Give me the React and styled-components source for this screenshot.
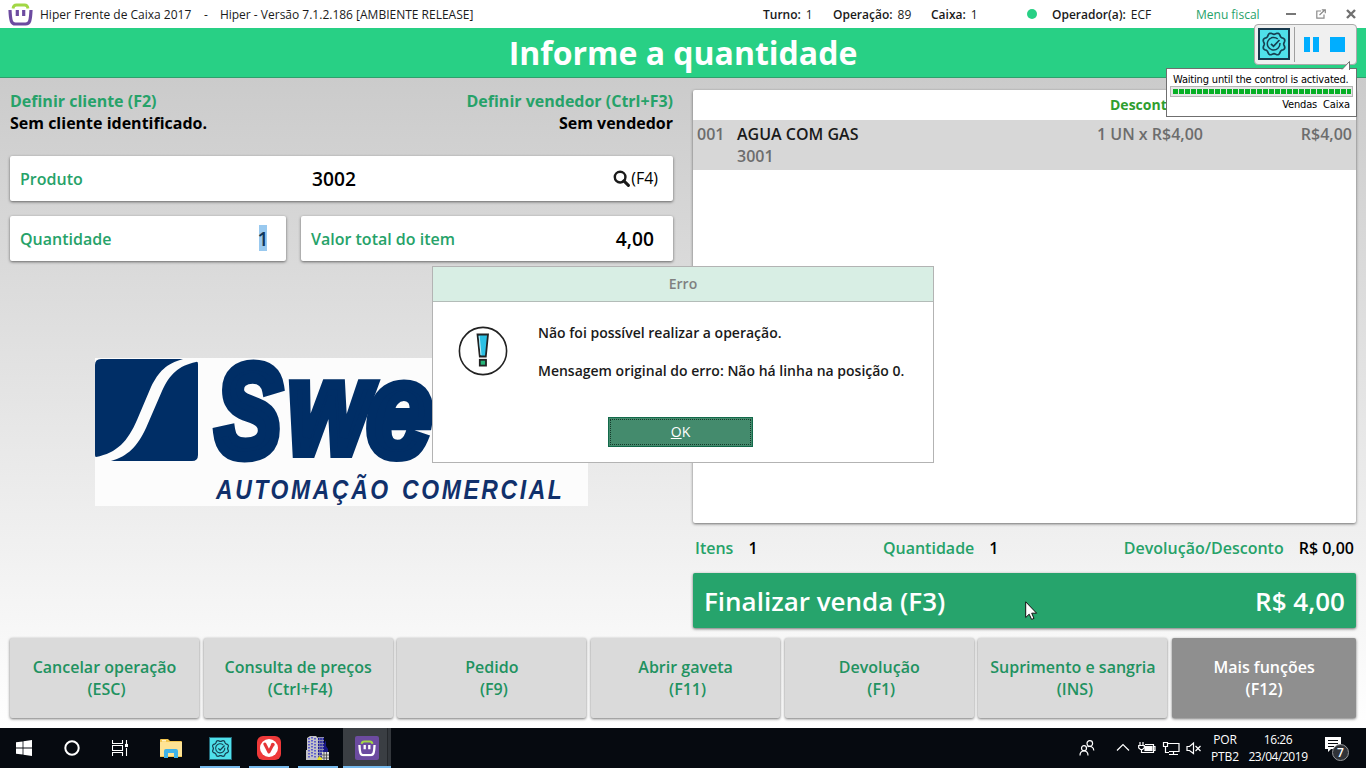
import React from "react";
import styled, { createGlobalStyle } from "styled-components";

const GlobalStyle = createGlobalStyle`
  * { box-sizing: border-box; }
  body { margin: 0; overflow: hidden; }
`;

const Screen = styled.div`
  position: relative;
  width: 1366px;
  height: 768px;
  display: flex;
  flex-direction: column;
  overflow: hidden;
  background: #fff;
  color: #000;
  font-family: "Open Sans", "Noto Sans", sans-serif;
  white-space: nowrap;
`;

const TitleBar = styled.header`
  height: 28px;
  flex: none;
  display: flex;
  align-items: center;
  padding: 0 10px 0 8px;
  font-size: 12px;
  line-height: 28px;
  color: #1a1a1a;
  > span, > a { padding-top: 2px; }
`;

const AppName = styled.span`
  width: 164px;
  margin-left: 7px;
`;

const Version = styled.span`
  margin-left: 12px;
  flex: 1;
`;

const Status = styled.span`
  width: ${(p) => p.$width}px;
  b { font-weight: 600; margin-right: 5px; }
`;

const OnlineDot = styled.i`
  width: 10px;
  height: 10px;
  margin-right: 15px;
  border-radius: 50%;
  background: #28d085;
`;

const MenuLink = styled.a`
  width: 90px;
  color: #26a269;
`;

const WindowControls = styled.div`
  display: flex;
  align-items: center;
  justify-content: space-between;
  width: 70px;
`;

const Banner = styled.h1`
  height: 50px;
  flex: none;
  margin: 0;
  border-bottom: 1px solid #2f9f6c;
  background: #28d085;
  color: #fff;
  text-align: center;
  font-size: 32px;
  font-weight: 700;
  line-height: 50px;
`;

const Workspace = styled.main`
  height: 650px;
  flex: none;
  display: flex;
  flex-direction: column;
  justify-content: space-between;
  padding: 12px 10px 10px;
  background: linear-gradient(#cbcbcb, #ffffff);
`;

const Columns = styled.div`
  display: grid;
  grid-template-columns: 663px 663px;
  column-gap: 20px;
`;

const Column = styled.section`
  display: flex;
  flex-direction: column;
`;

const People = styled.div`
  display: flex;
  justify-content: space-between;
  height: 66px;
  font-size: 16px;
  font-weight: 700;
  line-height: 22px;
`;

const Person = styled.div`
  text-align: ${(p) => p.$align || "left"};
  em { display: block; font-style: normal; color: #26a269; }
`;

const FieldRow = styled.div`
  display: flex;
  gap: 15px;
  margin-bottom: 15px;
`;

const Field = styled.div`
  flex: ${(p) => (p.$width ? `0 0 ${p.$width}px` : 1)};
  display: flex;
  align-items: center;
  height: 45px;
  padding: 0 ${(p) => p.$right}px 0 10px;
  border-radius: 2px;
  background: #fff;
  box-shadow: 0 1px 3px rgba(0, 0, 0, 0.55);
`;

const FieldLabel = styled.label`
  width: ${(p) => (p.$width ? `${p.$width}px` : "auto")};
  font-size: 16px;
  font-weight: 600;
  color: #26a269;
`;

const FieldValue = styled.output`
  flex: 1;
  text-align: ${(p) => p.$align || "right"};
  font-size: 19.2px;
  font-weight: 600;
  line-height: 26px;
`;

const Selected = styled.mark`
  display: inline-flex;
  justify-content: center;
  width: 8px;
  height: 26px;
  margin-top: -4px;
  padding-top: 1px;
  vertical-align: middle;
  background: #99c9ef;
  color: #10375c;
`;

const SearchHint = styled.span`
  display: flex;
  align-items: center;
  gap: 1px;
  padding-bottom: 1px;
  font-size: 16px;
`;

const Brand = styled.div`
  width: 493px;
  height: 148px;
  margin: 82px 0 0 85px;
`;

const Receipt = styled.div`
  height: 433px;
  border-radius: 2px;
  background: #fff;
  box-shadow: 0 1px 3px rgba(0, 0, 0, 0.55);
`;

const ReceiptHead = styled.div`
  height: 30px;
  padding-left: 417px;
  font-size: 14px;
  font-weight: 700;
  line-height: 30px;
  color: #2f9e2f;
`;

const ReceiptItem = styled.div`
  display: grid;
  grid-template-columns: 40px 1fr auto 149px;
  height: 50px;
  padding: 3px 4px;
  background: #d7d7d7;
  color: #6d6d6d;
  font-size: 16px;
  font-weight: 600;
  line-height: 22px;
`;

const ItemName = styled.div`
  strong { display: block; font-weight: 600; color: #1a1a1a; }
`;

const Price = styled.div`
  text-align: right;
`;

const Totals = styled.div`
  display: flex;
  justify-content: space-between;
  height: 50px;
  padding: 0 2px;
  font-size: 16px;
  font-weight: 600;
  line-height: 50px;
`;

const Total = styled.div`
  display: flex;
  gap: 15px;
  span { color: #26a269; }
`;

const Checkout = styled.button`
  display: flex;
  align-items: center;
  justify-content: space-between;
  height: 55px;
  padding: 0 11px;
  border: 0;
  border-radius: 2px;
  background: #26a46c;
  box-shadow: 0 1px 3px rgba(0, 0, 0, 0.55);
  color: #fff;
  font: 600 26px "Open Sans", "Noto Sans", sans-serif;
`;

const Actions = styled.nav`
  display: grid;
  grid-template-columns: repeat(6, 189px) 1fr;
  column-gap: 4.7px;
`;

const Action = styled.button`
  height: 80px;
  padding: 0 0 1px;
  border: 0;
  border-radius: 2px;
  background: ${(p) => (p.$dark ? "#8f8f8f" : "#dadada")};
  box-shadow: 0 1px 3px rgba(0, 0, 0, 0.55);
  color: ${(p) => (p.$dark ? "#fff" : "#219260")};
  font: 600 16px/22px "Open Sans", "Noto Sans", sans-serif;
  span { display: block; padding-left: ${(p) => (p.$dark ? 0 : 4)}px; }
`;

const Taskbar = styled.footer`
  height: 40px;
  flex: none;
  display: flex;
  background: #060a10;
  color: #fff;
`;

const Task = styled.div`
  width: ${(p) => p.$width || 49}px;
  display: flex;
  align-items: center;
  justify-content: center;
  padding-left: ${(p) => p.$indent || 0}px;
  background: ${(p) => (p.$active ? "#3a3e43" : "transparent")};
  box-shadow: ${(p) => (p.$active ? "inset -3px 0 #33373c, inset -4px 0 #24272b" : "none")};
`;

const OpenTask = styled(Task)`
  position: relative;
  padding-right: ${(p) => (p.$active ? 0 : 1)}px;
  &::after {
    content: "";
    position: absolute;
    left: ${(p) => (p.$active ? 0 : 4)}px;
    right: ${(p) => (p.$active ? 0 : 5)}px;
    bottom: 0;
    height: 2px;
    background: #76b9ed;
  }
`;

const Spacer = styled.div`
  flex: 1;
`;

const Tray = styled.div`
  display: flex;
  align-items: center;
  width: 287px;
  svg { flex: none; }
`;

const TrayGap = styled.i`
  width: ${(p) => p.$width}px;
`;

const TrayText = styled.div`
  width: ${(p) => p.$width}px;
  margin-left: ${(p) => p.$left || 0}px;
  text-align: center;
  font-size: 12px;
  line-height: 17px;
  letter-spacing: ${(p) => p.$spacing || 0}px;
`;

const Dialog = styled.div`
  position: absolute;
  left: 432px;
  top: 266px;
  width: 502px;
  height: 197px;
  border: 1px solid #b3b3b3;
  background: #fff;
`;

const DialogTitle = styled.div`
  height: 35px;
  border-bottom: 1px solid #b3bcb8;
  background: #d8eee4;
  color: #808080;
  text-align: center;
  font-size: 14px;
  font-weight: 600;
  line-height: 34px;
`;

const DialogBody = styled.div`
  display: flex;
  height: 115px;
  padding: 24px 0 0 25px;
`;

const DialogText = styled.div`
  margin: -3px 0 0 30px;
  font-size: 14px;
  font-weight: 600;
  line-height: 19px;
  color: #1a1a1a;
  p { margin: 0 0 19px; }
`;

const OkButton = styled.button`
  display: block;
  width: 145px;
  height: 30px;
  margin-left: 175px;
  padding: 0;
  border: 1px solid #12694a;
  outline: 1px dotted #163b2c;
  outline-offset: -3px;
  background: #448b6d;
  color: #fff;
  font: 14px/26px "Open Sans", "Noto Sans", sans-serif;
`;

const Recorder = styled.div`
  position: absolute;
  left: 1254px;
  top: 24px;
  width: 103px;
  height: 41px;
  display: flex;
  align-items: center;
  padding: 0 0 1px 3px;
  border: 1px solid #a9a9a9;
  border-radius: 4px;
  background: #f0f0f0;
`;

const Divider = styled.i`
  width: 1px;
  height: 35px;
  margin: 0 9px 0 4px;
  background: #a0a0a0;
`;

const Block = styled.i`
  width: ${(p) => p.$width}px;
  height: 15px;
  margin-right: ${(p) => p.$gap || 0}px;
  background: #00aeff;
`;

const Balloon = styled.div`
  position: absolute;
  left: 1166px;
  top: 68px;
  width: 191px;
  height: 49px;
  padding: 4px 3px 0;
  border: 1px solid #6f6f6f;
  background: #fff;
  font: 11px/13px "DejaVu Sans Condensed", "DejaVu Sans", sans-serif;
  font-stretch: condensed;
`;

const BalloonTail = styled.svg`
  position: absolute;
  right: 2px;
  top: -8px;
`;

const BalloonText = styled.div`
  padding: 0 3px;
  letter-spacing: -0.18px;
`;

const Progress = styled.div`
  height: 11px;
  margin: 0 0 2px;
  padding: 2px 1px 2px 2px;
  border: 1px solid #b5b5b5;
  background: #e6e6e6;
  span {
    display: block;
    height: 5px;
    background: repeating-linear-gradient(90deg, #06b025 0 5px, #e6e6e6 5px 6px);
  }
`;

const BalloonFoot = styled.div`
  display: flex;
  justify-content: flex-end;
  gap: 6px;
  padding-right: 3px;
  margin-top: -1px;
  letter-spacing: -0.15px;
`;

const Pointer = styled.svg`
  position: absolute;
  left: 1025px;
  top: 601px;
`;

const Basket = ({ handle = "#a2d745", body = "#6c4ba0", size = 25 }) => (
  <svg width={size} height={size * 0.92} viewBox="0 0 25 23" fill="none">
    <path d="M5 5.5C5.3 2.8 6.4 2 8.5 2H16.5C18.6 2 19.7 2.8 20 5.5" stroke={handle} strokeWidth="2.8" />
    <path d="M2 7C2.2 12 2.4 15 3.3 18C4 20.3 5.3 21 7.5 21H17.5C19.7 21 21 20.3 21.7 18C22.6 15 22.8 12 23 7" stroke={body} strokeWidth="3.2" />
    <path d="M9.3 7V13M15.7 7V13" stroke={body} strokeWidth="3.2" />
  </svg>
);

const gearPoints = Array.from({ length: 80 }, (_, i) => {
  const a = (i / 80) * Math.PI * 2;
  const r = 10.6 + 0.9 * Math.cos(a * 8 + Math.PI);
  return `${(13 + r * Math.cos(a)).toFixed(2)},${(13 + r * Math.sin(a)).toFixed(2)}`;
}).join(" ");

const Seal = ({ size, box, border, bg }) => (
  <svg width={box} height={box} viewBox={`0 0 ${box} ${box}`}>
    <rect width={box} height={box} fill={border} />
    <rect x={box > 28 ? 2 : 1} y={box > 28 ? 2 : 1} width={box - (box > 28 ? 4 : 2)} height={box - (box > 28 ? 4 : 2)} fill={bg} />
    <g transform={`translate(${(box - size) / 2} ${(box - size) / 2}) scale(${size / 26})`} fill="none" stroke="#164052">
      <polygon points={gearPoints} strokeWidth="1.7" strokeLinejoin="round" />
      <path d="M18.9 12A6.3 6.3 0 1 1 16.8 8" strokeWidth="1.5" />
      <path d="M10 12.8L12.5 15.3L18.5 9" strokeWidth="1.8" />
    </g>
  </svg>
);

const BrandSvg = styled.svg`
  display: block;
  overflow: visible;
`;

const BrandLogo = () => (
  <BrandSvg width="493" height="148" viewBox="95 358 493 148">
    <rect x="95" y="358" width="493" height="148" fill="#fcfcfc" />
    <path d="M101 359H183C166 364 159 371 151 387L137 420C128 441 117 453 96 457Q95 457 95 455V365Q95 359 101 359Z" fill="#002e66" />
    <path d="M196 362Q198 361 198 364V455Q198 461 192 461H111C128 456 137 447 146 428L162 391C170 374 178 366 196 362Z" fill="#002e66" />
    <g fill="#002e66" stroke="#002e66" strokeLinejoin="miter" fontFamily="Liberation Sans, Arial, sans-serif" fontWeight="700" fontStyle="italic" fontSize="130">
      <text transform="translate(216 456) scale(0.75 1)" strokeWidth="11">S</text>
      <text transform="translate(288 453) scale(0.8 1)" strokeWidth="10">w</text>
      <text transform="translate(367 456) scale(0.9 1.02)" strokeWidth="10">e</text>
    </g>
    <g fill="#10306b" fontFamily="Liberation Sans, Arial, sans-serif" fontSize="28" fontWeight="700" fontStyle="italic">
      <text transform="translate(216 499) scale(0.82 1)" textLength="210" lengthAdjust="spacing">AUTOMAÇÃO</text>
      <text transform="translate(402 499) scale(0.82 1)" textLength="195" lengthAdjust="spacing">COMERCIAL</text>
    </g>
  </BrandSvg>
);

const WarningIcon = () => (
  <svg width="50" height="50" viewBox="0 0 50 50">
    <circle cx="25" cy="25" r="23.6" fill="#fff" stroke="#222" strokeWidth="1.6" />
    <path d="M19.5 8.5H30L27.8 30.5H21.8Z" fill="#2cc0e4" stroke="#222" strokeWidth="1.8" />
    <path d="M21.2 10L23 29" stroke="#b9ecf7" strokeWidth="1" />
    <rect x="21.8" y="33.8" width="6.2" height="5.8" fill="#25b478" stroke="#222" strokeWidth="1.8" />
  </svg>
);

const WindowsIcon = () => (
  <svg width="16" height="16" viewBox="0 0 16 16" fill="#fff">
    <path d="M0 2.3L6.6 1.4V7.6H0ZM7.4 1.3L16 0V7.6H7.4ZM0 8.4H6.6V14.6L0 13.7ZM7.4 8.4H16V16L7.4 14.7Z" />
  </svg>
);

const TaskViewIcon = () => (
  <svg width="16" height="16" viewBox="0 0 16 16" fill="none" stroke="#fff" strokeWidth="1.1">
    <path d="M.5 0V3.5H10.5V0M.5 16V12.5H10.5V16M.5 5.5H10.5V10.5H.5ZM14.5 0V4M14.5 8V16" />
    <rect x="13.5" y="4.5" width="2" height="2" fill="#fff" />
  </svg>
);

const FolderIcon = () => (
  <svg width="22" height="19" viewBox="0 0 22 19">
    <path d="M0 1Q0 0 1 0H8L10 2H21Q22 2 22 3V18H0Z" fill="#f3c64f" />
    <path d="M0 3H22V17H0Z" fill="#fee394" />
    <rect x="2" y="1" width="4" height="1.5" fill="#fff3c8" />
    <path d="M4 19V12Q4 10 6 10H16Q18 10 18 12V19H14V14H8V19Z" fill="#3eb2e8" />
  </svg>
);

const VivaldiIcon = () => (
  <svg width="24" height="24" viewBox="0 0 24 24">
    <rect width="24" height="24" rx="6" fill="#ee3939" />
    <circle cx="12" cy="12" r="9" fill="#fff" />
    <path d="M7.8 8L11.9 16L15.2 9.7" fill="none" stroke="#e53638" strokeWidth="3" strokeLinecap="round" strokeLinejoin="round" />
    <circle cx="15.8" cy="8.6" r="1.9" fill="#e53638" />
  </svg>
);

const CityIcon = () => (
  <svg width="24" height="24" viewBox="0 0 24 24">
    <path d="M1 2L4 0H10L12 2V24H0V14H1Z" fill="#c3c3c8" />
    <path d="M3 2V22M6 1V22M9 2V22" stroke="#2a2ad0" strokeWidth="1.3" strokeDasharray="1.5 1.5" />
    <path d="M12 1H18V24H12Z" fill="#8d8dac" />
    <path d="M12.7 2V22M15 2V22M17.3 2V22" stroke="#1515a0" strokeWidth="1.3" strokeDasharray="2 1" />
    <path d="M18 8L20 4V10L22 13V18H18Z" fill="#171783" />
    <path d="M16 16H23V24H16Z" fill="#dadada" />
    <path d="M18 16V24M20.5 16V24M16 19H23M16 22H23" stroke="#444" strokeWidth=".8" />
    <path d="M11 24L13 20L16 22V24Z" fill="#e8df20" />
  </svg>
);

const PeopleIcon = () => (
  <svg width="16" height="16" viewBox="0 0 16 16" fill="none" stroke="#fff" strokeWidth="1.2">
    <circle cx="10.8" cy="3.5" r="2.8" />
    <circle cx="5" cy="8.2" r="2.5" />
    <path d="M1 15.5C1 12.5 2.5 11 5 11C7.5 11 9 12.5 9 15.5M8.4 6.8C11 5.6 14.8 6.8 14.8 10.6" />
  </svg>
);

const TrayIcons = () => (
  <svg width="88" height="20" viewBox="0 0 88 20" fill="none" stroke="#fff" strokeWidth="1.2">
    <path d="M2 12.5L8 6.5L14 12.5" />
    <path d="M30 6.5H38.5V14.5H29M38.5 8.5H40V12.5H38.5" />
    <rect x="30" y="8.5" width="7" height="4" fill="#fff" />
    <path d="M25 4V7M28 4V7M23.7 7.5H29.3V10L27.5 11.5H25.5L23.7 10ZM26.5 12V14.5H29" />
    <path d="M53 5.5H64V13.5H54M58.5 13.5V16.5M54 16.5H63M48.5 4.5H52.5V8.5H48.5ZM50.5 8.5V14.5H54" />
    <path d="M72 8.5H74.5L78.5 5V15.5L74.5 12.5H72Z" />
    <path d="M80.5 8L85.5 13M85.5 8L80.5 13" />
  </svg>
);

const NotificationIcon = () => (
  <svg width="26" height="26" viewBox="0 0 26 26">
    <path d="M0 2H16V14H6L3 17V14H0Z" fill="#fff" />
    <path d="M3 5.5H13M3 8.5H13M3 11.5H9" stroke="#060a10" />
    <circle cx="15.5" cy="17.5" r="8" fill="#303338" stroke="#96989b" />
    <text x="15.5" y="21.7" textAnchor="middle" fill="#fff" fontFamily="Open Sans, sans-serif" fontSize="12" fontWeight="600">7</text>
  </svg>
);

const actions = [
  ["Cancelar operação", "(ESC)"],
  ["Consulta de preços", "(Ctrl+F4)"],
  ["Pedido", "(F9)"],
  ["Abrir gaveta", "(F11)"],
  ["Devolução", "(F1)"],
  ["Suprimento e sangria", "(INS)"],
  ["Mais funções", "(F12)"],
];

export default function App() {
  return (
    <Screen>
      <GlobalStyle />
      <TitleBar>
        <Basket />
        <AppName>Hiper Frente de Caixa 2017</AppName>
        <span>-</span>
        <Version>Hiper - Versão 7.1.2.186 [AMBIENTE RELEASE]</Version>
        <Status $width={70}><b>Turno:</b>1</Status>
        <Status $width={98}><b>Operação:</b>89</Status>
        <Status $width={96}><b>Caixa:</b>1</Status>
        <OnlineDot />
        <Status $width={144}><b>Operador(a):</b>ECF</Status>
        <MenuLink>Menu fiscal</MenuLink>
        <WindowControls>
          <svg width="10" height="10" viewBox="0 0 10 10"><path d="M0 5H10" stroke="#777" strokeWidth="2" /></svg>
          <svg width="10" height="10" viewBox="0 0 10 10" fill="none" stroke="#8a8a8a">
            <path d="M5 2H.8V9.2H8V5.5M3.5 6L9 .8M5.8 .8H9.3V4.2" strokeWidth="1.2" />
          </svg>
          <svg width="10" height="10" viewBox="0 0 10 10"><path d="M1 1L9 9M9 1L1 9" stroke="#707070" strokeWidth="2.4" /></svg>
        </WindowControls>
      </TitleBar>
      <Banner>Informe a quantidade</Banner>
      <Workspace>
        <Columns>
          <Column>
            <People>
              <Person><em>Definir cliente (F2)</em>Sem cliente identificado.</Person>
              <Person $align="right"><em>Definir vendedor (Ctrl+F3)</em>Sem vendedor</Person>
            </People>
            <FieldRow>
              <Field $right={15}>
                <FieldLabel $width={292}>Produto</FieldLabel>
                <FieldValue $align="left">3002</FieldValue>
                <SearchHint>
                  <svg width="17" height="17" viewBox="0 0 16 16" fill="none" stroke="#1a1a1a">
                    <circle cx="6.7" cy="6.7" r="5" strokeWidth="2.3" />
                    <path d="M10.2 10.2L14.5 14.5" strokeWidth="2.8" strokeLinecap="round" />
                  </svg>
                  (F4)
                </SearchHint>
              </Field>
            </FieldRow>
            <FieldRow>
              <Field $width={276} $right={19}>
                <FieldLabel>Quantidade</FieldLabel>
                <FieldValue><Selected>1</Selected></FieldValue>
              </Field>
              <Field $right={19}>
                <FieldLabel>Valor total do item</FieldLabel>
                <FieldValue>4,00</FieldValue>
              </Field>
            </FieldRow>
            <Brand><BrandLogo /></Brand>
          </Column>
          <Column>
            <Receipt>
              <ReceiptHead>Desconto</ReceiptHead>
              <ReceiptItem>
                <span>001</span>
                <ItemName><strong>AGUA COM GAS</strong>3001</ItemName>
                <Price>1 UN x R$4,00</Price>
                <Price>R$4,00</Price>
              </ReceiptItem>
            </Receipt>
            <Totals>
              <Total><span>Itens</span>1</Total>
              <Total><span>Quantidade</span>1</Total>
              <Total><span>Devolução/Desconto</span>R$ 0,00</Total>
            </Totals>
            <Checkout><span>Finalizar venda (F3)</span><span>R$ 4,00</span></Checkout>
          </Column>
        </Columns>
        <Actions>
          {actions.map(([name, key], i) => (
            <Action key={key} $dark={i === 6}>{name}<span>{key}</span></Action>
          ))}
        </Actions>
      </Workspace>
      <Taskbar>
        <Task $width={48}><WindowsIcon /></Task>
        <Task $width={48}>
          <svg width="16" height="16" viewBox="0 0 16 16"><circle cx="8" cy="8" r="6.7" fill="none" stroke="#fff" strokeWidth="2" /></svg>
        </Task>
        <Task $width={48}><TaskViewIcon /></Task>
        <Task $width={52} $indent={2}><FolderIcon /></Task>
        <OpenTask><Seal size={19} box={23} border="#236a7a" bg="#4fe0ea" /></OpenTask>
        <OpenTask><VivaldiIcon /></OpenTask>
        <OpenTask><CityIcon /></OpenTask>
        <OpenTask $active $width={48}>
          <svg width="24" height="24" viewBox="0 0 24 24">
            <rect width="24" height="24" rx="2" fill="#6c4ba0" />
            <g transform="translate(3 4)"><Basket body="#fff" size={18} /></g>
          </svg>
        </OpenTask>
        <Spacer />
        <Tray>
          <PeopleIcon />
          <TrayGap $width={20} />
          <TrayIcons />
          <TrayText $width={30} $left={7} $spacing={-0.1}>POR<br />PTB2</TrayText>
          <TrayText $width={62} $left={7} $spacing={-0.45}>16:26<br />23/04/2019</TrayText>
          <TrayGap $width={16} />
          <NotificationIcon />
        </Tray>
      </Taskbar>
      <Dialog>
        <DialogTitle>Erro</DialogTitle>
        <DialogBody>
          <WarningIcon />
          <DialogText>
            <p>Não foi possível realizar a operação.</p>
            <p>Mensagem original do erro: Não há linha na posição 0.</p>
          </DialogText>
        </DialogBody>
        <OkButton><u>O</u>K</OkButton>
      </Dialog>
      <Recorder>
        <Seal size={26} box={32} border="#16384c" bg="#4fe0ea" />
        <Divider />
        <Block $width={6} $gap={3} />
        <Block $width={6} $gap={11} />
        <Block $width={15} />
      </Recorder>
      <Balloon>
        <BalloonTail width="18" height="9" viewBox="0 0 18 9">
          <path d="M6 8.5L13.5 .5V9" fill="#fff" stroke="#6f6f6f" />
          <path d="M7 8.6H13" stroke="#fff" />
        </BalloonTail>
        <BalloonText>Waiting until the control is activated.</BalloonText>
        <Progress><span /></Progress>
        <BalloonFoot><span>Vendas</span><span>Caixa</span></BalloonFoot>
      </Balloon>
      <Pointer width="13" height="20" viewBox="0 0 13 20">
        <path d="M.7 .8V16.5L4.2 13.2L6.6 18.4L9 17.4L6.7 12.2H11.6Z" fill="#fff" stroke="#111" strokeWidth="1" />
      </Pointer>
    </Screen>
  );
}
